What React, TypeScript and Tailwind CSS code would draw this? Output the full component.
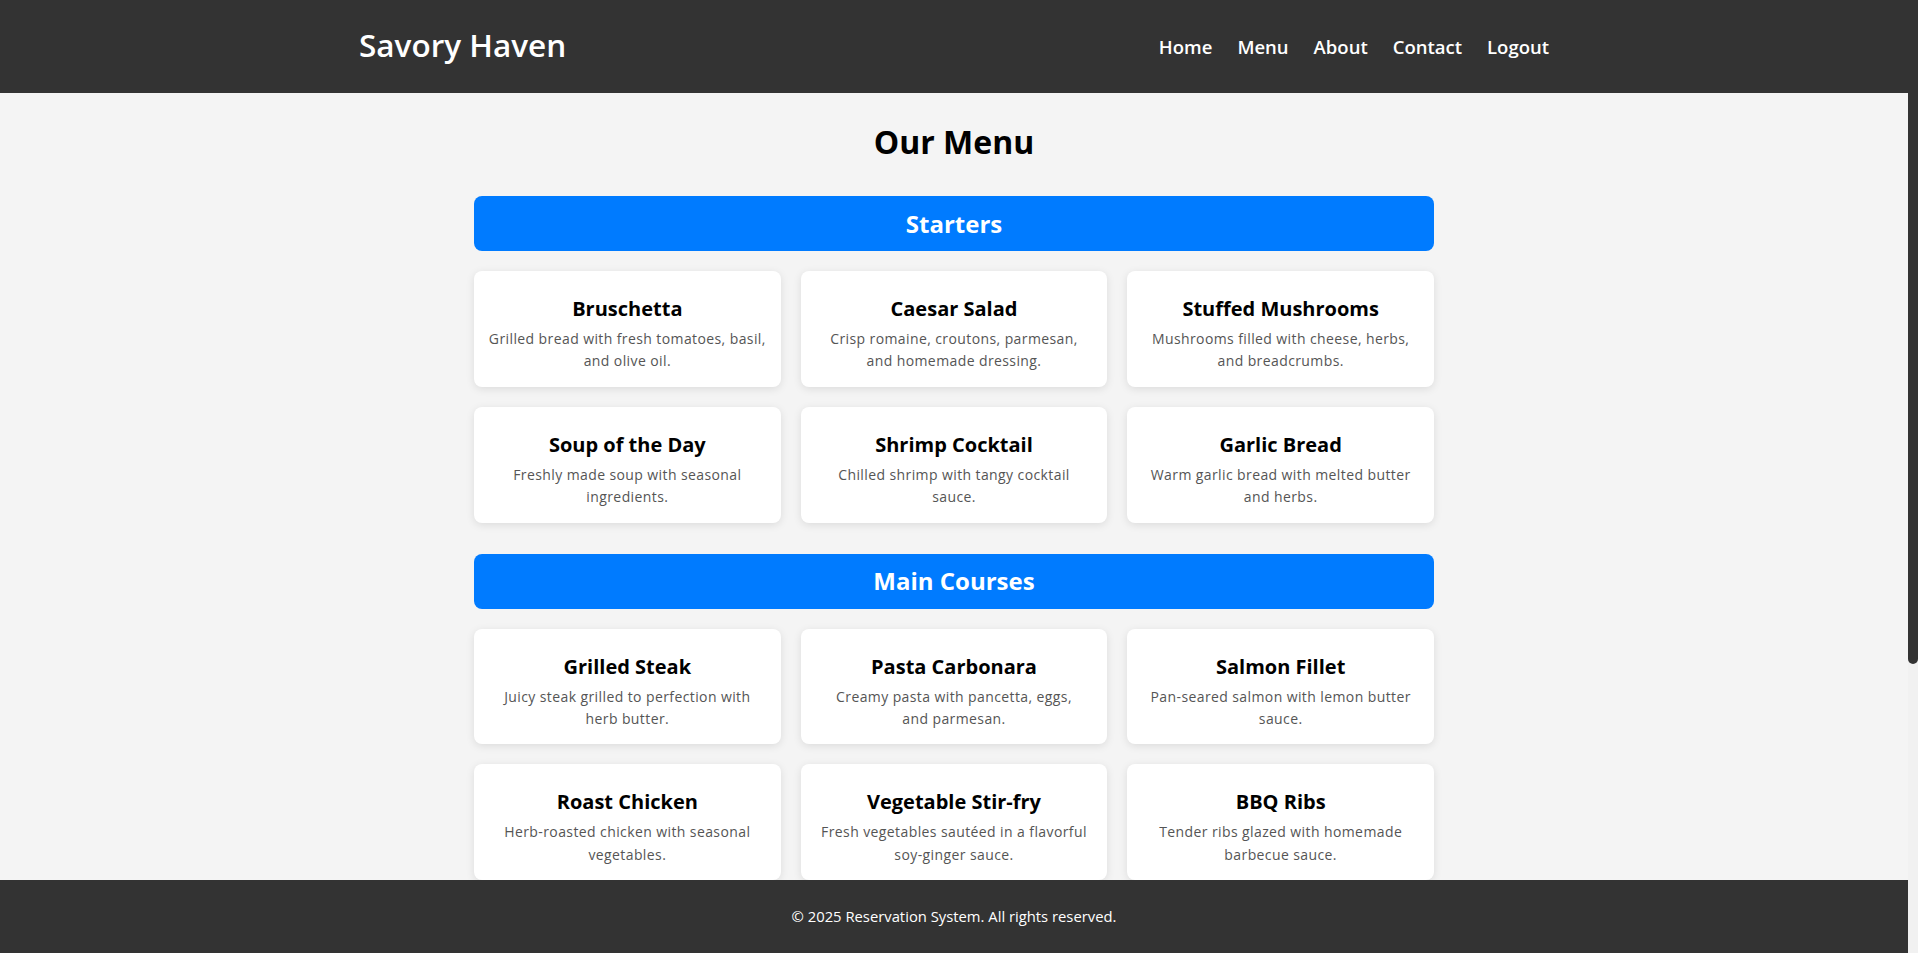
type Dish = { name: string; desc: string[] }

const sections: { title: string; items: Dish[] }[] = [
  {
    title: 'Starters',
    items: [
      { name: 'Bruschetta', desc: ['Grilled bread with fresh tomatoes, basil,', 'and olive oil.'] },
      { name: 'Caesar Salad', desc: ['Crisp romaine, croutons, parmesan,', 'and homemade dressing.'] },
      { name: 'Stuffed Mushrooms', desc: ['Mushrooms filled with cheese, herbs,', 'and breadcrumbs.'] },
      { name: 'Soup of the Day', desc: ['Freshly made soup with seasonal', 'ingredients.'] },
      { name: 'Shrimp Cocktail', desc: ['Chilled shrimp with tangy cocktail', 'sauce.'] },
      { name: 'Garlic Bread', desc: ['Warm garlic bread with melted butter', 'and herbs.'] },
    ],
  },
  {
    title: 'Main Courses',
    items: [
      { name: 'Grilled Steak', desc: ['Juicy steak grilled to perfection with', 'herb butter.'] },
      { name: 'Pasta Carbonara', desc: ['Creamy pasta with pancetta, eggs,', 'and parmesan.'] },
      { name: 'Salmon Fillet', desc: ['Pan-seared salmon with lemon butter', 'sauce.'] },
      { name: 'Roast Chicken', desc: ['Herb-roasted chicken with seasonal', 'vegetables.'] },
      { name: 'Vegetable Stir-fry', desc: ['Fresh vegetables sautéed in a flavorful', 'soy-ginger sauce.'] },
      { name: 'BBQ Ribs', desc: ['Tender ribs glazed with homemade', 'barbecue sauce.'] },
    ],
  },
  {
    title: 'Desserts',
    items: [
      { name: 'Chocolate Lava Cake', desc: ['Warm chocolate cake with a molten', 'center.'] },
      { name: 'Tiramisu', desc: ['Classic Italian dessert with espresso', 'and mascarpone.'] },
      { name: 'Cheesecake', desc: ['Creamy cheesecake with a graham', 'cracker crust.'] },
      { name: 'Apple Pie', desc: ['Homemade pie with cinnamon-spiced', 'apples.'] },
      { name: 'Crème Brûlée', desc: ['Rich custard topped with caramelized', 'sugar.'] },
      { name: 'Ice Cream Sundae', desc: ['Vanilla ice cream with chocolate sauce', 'and nuts.'] },
    ],
  },
]

const navLinks = ['Home', 'Menu', 'About', 'Contact', 'Logout']

function MenuCard({ dish }: { dish: Dish }) {
  return (
    <div className="bg-white rounded-lg shadow-[0_2px_8px_rgba(0,0,0,0.1)] px-[10px] pt-[22px] pb-[14px] text-center">
      <h3 className="text-[20px] font-bold leading-[32px] text-black mb-[3px]">{dish.name}</h3>
      <p className="text-[14px] leading-[22.4px] text-[#555] tracking-[0.4px]">
        {dish.desc.map(line => (
          <span key={line} className="block whitespace-nowrap">
            {line}
          </span>
        ))}
      </p>
    </div>
  )
}

export default function App() {
  return (
    <div className="h-screen flex bg-[#f4f4f4] text-[#333] font-['Open_Sans',sans-serif]">
      <div className="flex-1 min-w-0 overflow-y-auto [scrollbar-width:none]">
        {/* Header */}
        <header className="bg-[#333] h-[93px]">
          <div className="w-[1190px] mx-auto h-full flex items-center justify-between">
            <h1 className="text-white text-[31.5px] font-semibold mb-[4px]">Savory Haven</h1>
            <nav className="flex items-center gap-[25px]">
              {navLinks.map(link => (
                <a key={link} href="#" className="text-white text-[18.5px] font-semibold">
                  {link}
                </a>
              ))}
            </nav>
          </div>
        </header>

        {/* Menu */}
        <main className="w-[960px] mx-auto pt-[23px] pb-[130px]">
          <h2 className="text-center text-[32px] font-bold leading-[51px] text-black mb-[29px]">Our Menu</h2>
          {sections.map(section => (
            <section key={section.title} className="mb-[31px]">
              <div className="bg-[#007bff] rounded-lg h-[55px] flex items-center justify-center mb-5">
                <h2 className="text-white text-[24px] font-bold">{section.title}</h2>
              </div>
              <div className="grid grid-cols-3 gap-5">
                {section.items.map(dish => (
                  <MenuCard key={dish.name} dish={dish} />
                ))}
              </div>
            </section>
          ))}
        </main>
      </div>

      {/* Scrollbar */}
      <div className="w-[10px] shrink-0 bg-[#f1f1f1]">
        <div className="h-[664px] bg-[#333] rounded-b-[5px]" />
      </div>

      {/* Footer */}
      <footer className="fixed bottom-0 left-0 right-[10px] h-[73px] bg-[#333] flex items-center justify-center">
        <p className="text-white text-[14.8px] font-medium">&copy; 2025 Reservation System. All rights reserved.</p>
      </footer>
    </div>
  )
}
